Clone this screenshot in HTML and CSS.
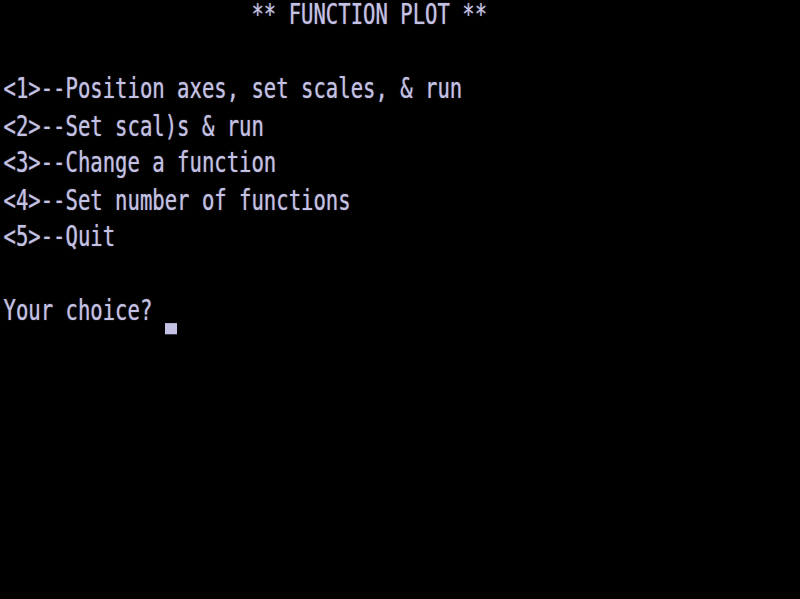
FILE: index.html
```html
<!DOCTYPE html>
<html>
<head>
<meta charset="utf-8">
<link rel="stylesheet" href="styles.css">
</head>
<body>
<div class="screen">
<pre class="term">                    ** FUNCTION PLOT **

&lt;1&gt;--Position axes, set scales, &amp; run
&lt;2&gt;--Set scal)s &amp; run
&lt;3&gt;--Change a function
&lt;4&gt;--Set number of functions
&lt;5&gt;--Quit

Your choice? <span class="cursor"></span></pre>
</div>
</body>
</html>
```
FILE: styles.css
```css
html, body {
  margin: 0;
  padding: 0;
  background: #000;
  width: 800px;
  height: 599px;
  overflow: hidden;
}
.screen {
  width: 800px;
  height: 599px;
  background: #000;
}
.term {
  margin: 0;
  padding: 0 0 0 3.5px;
  font-family: "DejaVu Sans Mono", "Liberation Mono", monospace;
  font-size: 20.6px;
  line-height: 26.5px;
  color: #c4c2e4;
  text-shadow: 0 0 1px rgba(196, 194, 228, 0.6);
  transform: translateY(-4.5px) scale(1, 1.4);
  transform-origin: 0 0;
  white-space: pre;
}
.cursor {
  display: inline-block;
  width: 12px;
  height: 7.2px;
  background: #c4c2e4;
  vertical-align: -9.5px;
}
```
